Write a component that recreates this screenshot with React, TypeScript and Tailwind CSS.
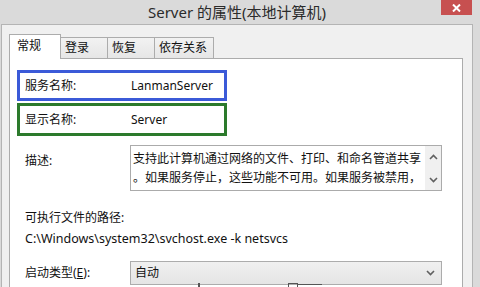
import React from "react";

const font = { fontFamily: "'Noto Sans', 'Noto Sans CJK SC', sans-serif" };

function ChevronUp() {
  return (
    <svg width="9" height="6" viewBox="0 0 9 6" className="block">
      <path d="M1 5 L4.5 1.5 L8 5" fill="none" stroke="#606060" strokeWidth="1.6" />
    </svg>
  );
}
function ChevronDown() {
  return (
    <svg width="9" height="6" viewBox="0 0 9 6" className="block">
      <path d="M1 1 L4.5 4.5 L8 1" fill="none" stroke="#606060" strokeWidth="1.6" />
    </svg>
  );
}

export default function App() {
  return (
    <div
      className="relative w-[480px] h-[287px] overflow-hidden bg-[#dadada] text-[12px] text-[#111] leading-none"
      style={font}
    >
      {/* Title bar */}
      <div className="relative h-[24px] flex items-center justify-center">
        <span className="text-[15px] text-[#2b2b2b] ml-[-6px]">Server 的属性(本地计算机)</span>
        <div className="absolute right-[8px] top-0 w-[31px] h-[15px] bg-[#c75050] flex items-center justify-center">
          <svg width="9" height="8" viewBox="0 0 9 8">
            <path d="M1 0.5 L8 7.5 M8 0.5 L1 7.5" stroke="#fff" strokeWidth="2" />
          </svg>
        </div>
      </div>

      {/* Window body */}
      <div className="ml-[1px] w-[472px] h-[263px] bg-[#f0f0f0] border-l border-t border-r border-[#b4b4b4] pl-[7px] pr-[9px] pt-[9px]">
        {/* Tabs */}
        <div className="flex items-end h-[25px] relative z-10">
          <div className="w-[52px] h-[25px] bg-white border-l border-t border-r border-[#acacac] pl-[7px] pt-[5px]">
            常规
          </div>
          <div className="w-[47px] h-[21px] mb-[1px] bg-gradient-to-b from-[#f2f2f2] to-[#e6e6e6] border-t border-r border-[#acacac] pl-[4px] pt-[4px]">
            登录
          </div>
          <div className="w-[47px] h-[21px] mb-[1px] bg-gradient-to-b from-[#f2f2f2] to-[#e6e6e6] border-t border-r border-[#acacac] pl-[4px] pt-[4px]">
            恢复
          </div>
          <div className="w-[59px] h-[21px] mb-[1px] bg-gradient-to-b from-[#f2f2f2] to-[#e6e6e6] border-t border-r border-[#acacac] pl-[4px] pt-[4px]">
            依存关系
          </div>
        </div>

        {/* Panel */}
        <div className="mt-[-1px] w-[454px] h-[240px] bg-white border border-[#acacac] pl-[7px]">
          <div className="mt-[11px] w-[210px] h-[31px] border-[3px] border-[#3b5ad8] flex items-center pl-[5px]">
            <span className="w-[106px]">服务名称:</span>
            <span>LanmanServer</span>
          </div>
          <div className="mt-[2px] w-[210px] h-[33px] border-[3px] border-[#2c7a2c] flex items-center pl-[5px]">
            <span className="w-[106px]">显示名称:</span>
            <span>Server</span>
          </div>

          <div className="mt-[9px] flex">
            <span className="w-[113px] pl-[8px] pt-[10px]">描述:</span>
            <div className="w-[312px] h-[46px] border border-[#ababab] flex">
              <div className="flex-1 pl-[2px] pt-[3px] leading-[19px] overflow-hidden whitespace-nowrap">
                <div>支持此计算机通过网络的文件、打印、和命名管道共享</div>
                <div>。如果服务停止，这些功能不可用。如果服务被禁用，</div>
              </div>
              <div className="w-[16px] bg-[#f0f0f0] flex flex-col items-center justify-between pt-[8px] pb-[7px]">
                <ChevronUp />
                <ChevronDown />
              </div>
            </div>
          </div>

          <div className="mt-[21px] pl-[8px]">可执行文件的路径:</div>
          <div className="mt-[9px] pl-[8px] text-[12.5px]">C:\Windows\system32\svchost.exe -k netsvcs</div>

          <div className="mt-[15px] flex">
            <span className="w-[113px] pl-[8px] pt-[6px]">启动类型(<span className="underline">E</span>):</span>
            <div className="w-[312px] h-[24px] border border-[#acacac] bg-gradient-to-b from-[#f0f0f0] to-[#e5e5e5] flex items-center justify-between pl-[4px] pr-[6px]">
              <span>自动</span>
              <ChevronDown />
            </div>
          </div>
        </div>
      </div>

      {/* Partial annotation shapes at the bottom */}
      <div className="absolute left-[198px] top-[283px] w-[2px] h-[4px] bg-[#555]" />
      <div className="absolute left-[288px] top-[283px] w-[10px] h-[6px] border border-[#555]" />
      <div className="absolute left-[298px] top-[284px] w-[24px] h-[1px] bg-[#555]" />
    </div>
  );
}
